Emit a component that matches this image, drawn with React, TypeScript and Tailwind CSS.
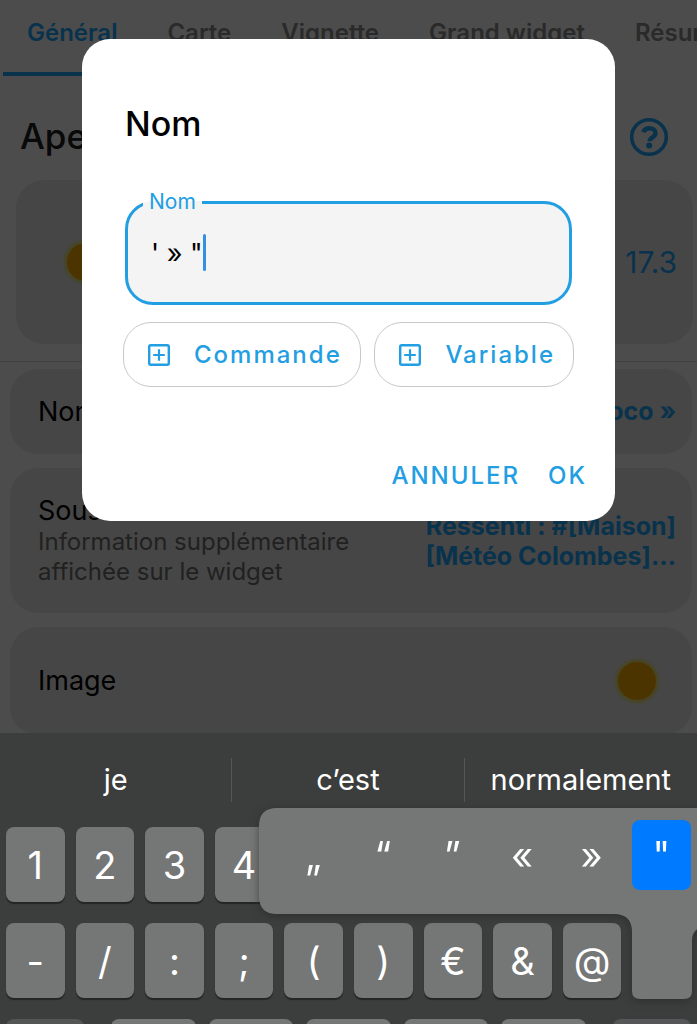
import type { ReactNode } from "react";

const TABS = ["Général", "Carte", "Vignette", "Grand widget", "Résumé"];

const SUGGESTIONS = ["je", "c’est", "normalement"];

// The callout covers the rest of the digit row, so only the first keys are drawn.
const DIGITS = ["1", "2", "3", "4"];
const SYMBOLS = ["-", "/", ":", ";", "(", ")", "€", "&", "@"];
const PUNCTUATION = ["Point", "Virgule", "Point d’interrogation", "Point d’exclamation", "Apostrophe"];
const QUOTES = [
  { glyph: "„", label: "Guillemet bas" },
  { glyph: "“", label: "Guillemet ouvrant" },
  { glyph: "”", label: "Guillemet fermant" },
  { glyph: "«", label: "Guillemet français ouvrant" },
  { glyph: "»", label: "Guillemet français fermant" },
];

const rowCls = "grid h-[75px] grid-cols-10 gap-[11px]";
const keyCls =
  "flex items-center justify-center rounded-lg bg-[#757676] pt-px text-[38px] leading-none text-white shadow-[0_2px_1px_#242424]";

function Sun() {
  return (
    <svg viewBox="0 0 48 48" className="size-12 shrink-0" aria-hidden="true">
      <defs>
        <radialGradient id="halo">
          <stop offset="0.76" stopColor="#ffdc00" stopOpacity="0.6" />
          <stop offset="0.88" stopColor="#e6dc00" stopOpacity="0.35" />
          <stop offset="1" stopColor="#ffdc00" stopOpacity="0" />
        </radialGradient>
      </defs>
      <circle cx="24" cy="24" r="24" fill="url(#halo)" />
      <circle cx="24" cy="24" r="19" fill="#ffb000" />
    </svg>
  );
}

function HelpIcon() {
  return (
    <svg viewBox="0 0 40 40" className="size-10" fill="none" stroke="currentColor" aria-hidden="true">
      <circle cx="20" cy="20" r="17.3" strokeWidth="3.6" />
      <path
        d="M14.2 15.2C15.4 12.5 17.5 11.2 20.3 11.2c3.5 0 6.2 2 6.2 5 0 4.2-5.9 4-5.9 8"
        strokeWidth="4.4"
      />
      <circle cx="20.2" cy="28.6" r="3" fill="currentColor" stroke="none" />
    </svg>
  );
}

function PlusBoxIcon() {
  return (
    <svg viewBox="0 0 22 22" className="size-[22px]" fill="none" stroke="currentColor" aria-hidden="true">
      <rect x="1.2" y="1.2" width="19.6" height="19.6" rx="1.5" strokeWidth="2.4" />
      <path d="M11 5.2v11.6M5.2 11h11.6" strokeWidth="2.2" />
    </svg>
  );
}

function SettingRow({
  title,
  hint,
  className,
  children,
}: {
  title: string;
  hint?: string;
  className: string;
  children: ReactNode;
}) {
  return (
    <section
      className={`flex items-center justify-between rounded-[28px] bg-[#ebebeb] pr-4 pl-7 ${className}`}
    >
      <div>
        <h2 className="text-[27px] leading-8 text-black">{title}</h2>
        {hint && <p className="max-w-[330px] text-[24px] leading-[30px] text-[#707070]">{hint}</p>}
      </div>
      {children}
    </section>
  );
}

function InsertButton({ label }: { label: string }) {
  return (
    <button
      type="button"
      className="flex h-[65px] items-center gap-6 rounded-[28px] border border-[#c8c8cc] pr-[18px] pl-6 text-[24px] font-medium tracking-[2px]"
    >
      <PlusBoxIcon />
      {label}
    </button>
  );
}

function SettingsPage() {
  return (
    <div className="bg-white text-[#20a8ff]">
      <nav className="flex h-[76px] gap-[2px] overflow-hidden pl-[3px]">
        {TABS.map((tab, i) => (
          <a
            key={tab}
            href="#"
            aria-current={i === 0 ? "page" : undefined}
            className={`shrink-0 border-b-4 px-6 pt-[18px] text-[24px] leading-[30px] font-semibold ${
              i === 0 ? "border-[#20a8ff]" : "border-transparent text-[#8c8c8c]"
            }`}
          >
            {tab}
          </a>
        ))}
      </nav>

      <header className="flex h-[104px] items-center justify-between pt-[17px] pr-7 pl-5">
        <h1 className="text-[35px] font-medium text-[#202020]">Aperçu</h1>
        <button type="button" aria-label="Aide">
          <HelpIcon />
        </button>
      </header>

      <div className="border-b border-[#d8d8d8] pr-1 pb-[17px] pl-4">
        <section className="flex h-[164px] items-center justify-between rounded-[28px] bg-[#ebebeb] pr-4 pl-[46px]">
          <Sun />
          <span className="text-[30px]">17.3</span>
        </section>
      </div>

      <div className="flex flex-col gap-[14px] pt-[7px] pr-[5px] pl-[10px]">
        <SettingRow title="Nom" className="h-[85px]">
          <strong className="text-[25px] font-bold">« Météo Coco »</strong>
        </SettingRow>
        <SettingRow
          title="Sous-titre"
          hint="Information supplémentaire affichée sur le widget"
          className="h-[145px]"
        >
          <strong className="text-right text-[25px] leading-[30px] font-bold">
            Ressenti : #[Maison]
            <br />
            [Météo Colombes]…
          </strong>
        </SettingRow>
        <SettingRow title="Image" className="h-[108px]">
          <span className="pr-[15px]">
            <Sun />
          </span>
        </SettingRow>
      </div>
    </div>
  );
}

function NameDialog() {
  return (
    <div
      role="dialog"
      aria-modal="true"
      aria-labelledby="dialog-title"
      className="w-full rounded-[28px] bg-white px-[41px] pt-[62px] pb-[19px] text-[#229ee2]"
    >
      <h2 id="dialog-title" className="px-[2px] text-[34px] leading-[46px] font-medium text-black">
        Nom
      </h2>

      <fieldset className="mx-[2px] mt-[43px] h-[115px] rounded-[28px] border-[3px] border-[#229ee2] bg-[#f4f4f4] px-[15px]">
        <legend className="px-[6px] text-[21px] leading-6">
          <label htmlFor="name">Nom</label>
        </legend>
        <div className="flex h-[76px] items-center pl-2">
          <input
            id="name"
            defaultValue={"' » \""}
            className="field-sizing-content min-w-0 bg-transparent pt-1 text-[27px] text-black outline-none"
          />
          <span className="h-[37px] w-[3px] rounded-full bg-[#338fe0]" />
        </div>
      </fieldset>

      <div className="mt-[17px] flex justify-between">
        <InsertButton label="Commande" />
        <InsertButton label="Variable" />
      </div>

      <div className="-mr-[13px] mt-[63px] flex justify-end gap-7 text-[24px] font-medium tracking-[2px]">
        <button type="button" className="h-[52px]">
          ANNULER
        </button>
        <button type="button" className="h-[52px]">
          OK
        </button>
      </div>
    </div>
  );
}

function Keyboard() {
  return (
    <div className="relative h-[291px] shrink-0 overflow-hidden bg-[#3c3d3d] text-white">
      <div className="grid h-[94px] grid-cols-3 items-center divide-x divide-[#555]">
        {SUGGESTIONS.map((word) => (
          <button key={word} type="button" className="h-11 text-[29px]">
            {word}
          </button>
        ))}
      </div>

      <div className="flex flex-col gap-[21px] px-[6px]">
        <div className={rowCls}>
          {DIGITS.map((key) => (
            <button key={key} type="button" className={keyCls}>
              {key}
            </button>
          ))}
        </div>
        <div className={rowCls}>
          {SYMBOLS.map((key) => (
            <button key={key} type="button" className={keyCls}>
              {key}
            </button>
          ))}
        </div>
        <div className="flex h-[75px] gap-[13px]">
          <button type="button" aria-label="Autres symboles" className="w-[78px] rounded-lg bg-[#535454]" />
          <div className="flex flex-1 gap-[13px] px-[14px]">
            {PUNCTUATION.map((label) => (
              <button key={label} type="button" aria-label={label} className="flex-1 rounded-lg bg-[#757676]" />
            ))}
          </div>
          <button type="button" aria-label="Effacer" className="w-[78px] rounded-lg bg-[#535758]" />
        </div>
      </div>

      {/* long-press callout, joined to the key it grows from */}
      <div className="absolute top-[75px] right-0 w-[438px] drop-shadow-[0_2px_4px_#2228]">
        <svg viewBox="0 0 438 191" className="w-full" aria-hidden="true">
          <path
            d="M18 0H460V116Q433 116 433 132V183Q433 191 425 191H381Q373 191 373 183V124C373 112 367 106 355 106H18Q0 106 0 88V18Q0 0 18 0Z"
            fill="#757676"
          />
        </svg>
        <div className="absolute inset-x-0 top-3 flex h-[70px] gap-[11px] pr-[6px] pl-[25px]">
          {QUOTES.map((q) => (
            <button key={q.glyph} type="button" aria-label={q.label} className="flex-1 text-[38px] leading-none">
              {q.glyph}
            </button>
          ))}
          <button type="button" className="w-[59px] rounded-lg bg-[#007aff] text-[38px] leading-none">
            "
          </button>
        </div>
      </div>
    </div>
  );
}

export default function App() {
  return (
    <div className="flex h-screen flex-col overflow-hidden bg-white font-[Inter,'Liberation_Sans',sans-serif]">
      <main className="relative min-h-0 flex-1 overflow-hidden">
        <SettingsPage />
        <div className="absolute inset-0 flex items-start bg-black/70 px-[82px] pt-[39px]">
          <NameDialog />
        </div>
      </main>
      <Keyboard />
    </div>
  );
}
